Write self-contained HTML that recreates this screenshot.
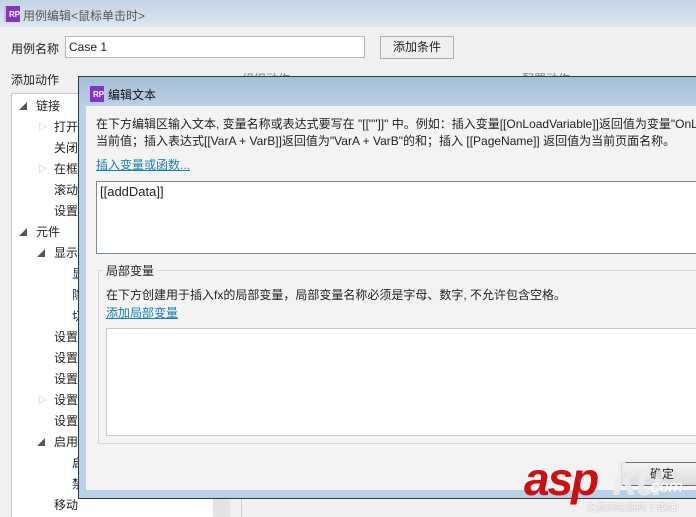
<!DOCTYPE html>
<html><head><meta charset="utf-8"><style>
*{margin:0;padding:0;box-sizing:border-box}
html,body{width:696px;height:517px;overflow:hidden}
body{position:relative;background:#f0f0f0;font-family:"Liberation Sans","Noto Sans CJK SC",sans-serif;font-size:12px;color:#222}
.a{position:absolute;white-space:nowrap}
.rp{position:absolute;width:16px;height:16px;background:#8236c4;color:#fff;font-size:8px;line-height:18px;text-align:left;padding-left:3px;font-weight:bold;border-left:2px solid #d4b4ee;overflow:hidden}
.tri{position:absolute;font-size:8px;color:#555}
.tro{position:absolute;font-size:9px;color:#bbb}
.lnk{color:#1a7fb0;text-decoration:underline}
#dlg{position:absolute;left:78px;top:76px;width:618px;height:423px;overflow:hidden}
</style></head><body>
<div class="a" style="left:0;top:0;width:696px;height:27px;background:linear-gradient(#c4d3e4,#dce6f0)"></div>
<div class="rp" style="left:4px;top:6px">RP</div>
<div class="a" style="left:23px;top:7px;font-size:12px;color:#555">用例编辑&lt;鼠标单击时&gt;</div>
<div class="a" style="left:11px;top:40px">用例名称</div>
<div class="a" style="left:65px;top:36px;width:300px;height:22px;background:#fff;border:1px solid #b5b5b5;padding:3px 3px;font-size:12px">Case 1</div>
<div class="a" style="left:380px;top:36px;width:74px;height:23px;background:#efefef;border:1px solid #adadad;text-align:center;line-height:21px">添加条件</div>
<div class="a" style="left:11px;top:71px">添加动作</div>
<div class="a" style="left:242px;top:70px;color:#777">组织动作</div>
<div class="a" style="left:522px;top:70px;color:#777">配置动作</div>
<div class="a" style="left:11px;top:93px;width:204px;height:430px;background:#fff;border:1px solid #c8c8c8"></div>
<div class="a" style="left:213px;top:498px;width:17px;height:20px;background:#e4e4e4"></div>
<div class="a" style="left:241px;top:498px;width:1px;height:20px;background:#ccc"></div>
<div class="tri" style="left:19px;top:101px">◢</div><div class="a" style="left:36px;top:97px">链接</div>
<div class="tro" style="left:38px;top:120px">▷</div><div class="a" style="left:54px;top:118px">打开</div>
<div class="a" style="left:54px;top:139px">关闭</div>
<div class="tro" style="left:38px;top:162px">▷</div><div class="a" style="left:54px;top:160px">在框</div>
<div class="a" style="left:54px;top:181px">滚动</div>
<div class="a" style="left:54px;top:202px">设置</div>
<div class="tri" style="left:19px;top:227px">◢</div><div class="a" style="left:36px;top:223px">元件</div>
<div class="tri" style="left:37px;top:248px">◢</div><div class="a" style="left:54px;top:244px">显示</div>
<div class="a" style="left:72px;top:265px">显</div>
<div class="a" style="left:72px;top:286px">隐</div>
<div class="a" style="left:72px;top:307px">切</div>
<div class="a" style="left:54px;top:328px">设置</div>
<div class="a" style="left:54px;top:349px">设置</div>
<div class="a" style="left:54px;top:370px">设置</div>
<div class="tro" style="left:38px;top:393px">▷</div><div class="a" style="left:54px;top:391px">设置</div>
<div class="a" style="left:54px;top:412px">设置</div>
<div class="tri" style="left:37px;top:437px">◢</div><div class="a" style="left:54px;top:433px">启用</div>
<div class="a" style="left:72px;top:454px">启</div>
<div class="a" style="left:72px;top:475px">禁</div>
<div class="a" style="left:54px;top:496px">移动</div>

<div id="dlg">
<div class="a" style="left:0;top:0;width:640px;height:423px;background:#b9d1e8;border:1px solid #2c3a46"></div>
<div class="a" style="left:1px;top:1px;width:640px;height:29px;background:linear-gradient(#a6bfd8,#b9d0e6)"></div>
<div class="rp" style="left:10px;top:10px">RP</div>
<div class="a" style="left:30px;top:10px;font-size:12px;color:#111">编辑文本</div>
<div class="a" style="left:8px;top:30px;width:640px;height:384px;background:#f3f3f3"></div>
<div class="a" style="left:18px;top:39px;font-size:12px">在下方编辑区输入文本, 变量名称或表达式要写在 "[[""]]" 中。例如：插入变量[[OnLoadVariable]]返回值为变量"OnLoadVariable"的</div>
<div class="a" style="left:18px;top:56px;font-size:12px">当前值；插入表达式[[VarA + VarB]]返回值为"VarA + VarB"的和；插入 [[PageName]] 返回值为当前页面名称。</div>
<div class="a lnk" style="left:18px;top:80px">插入变量或函数...</div>
<div class="a" style="left:18px;top:105px;width:640px;height:73px;background:#fff;border:1px solid #7a8a99;padding:2px 3px;font-size:13px">[[addData]]</div>
<div class="a" style="left:20px;top:194px;width:640px;height:174px;border:1px solid #d5d5d5"></div>
<div class="a" style="left:25px;top:186px;background:#f3f3f3;padding:0 3px">局部变量</div>
<div class="a" style="left:28px;top:210px">在下方创建用于插入fx的局部变量，局部变量名称必须是字母、数字, 不允许包含空格。</div>
<div class="a lnk" style="left:28px;top:228px">添加局部变量</div>
<div class="a" style="left:28px;top:252px;width:640px;height:108px;background:#fff;border:1px solid #c8c8c8"></div>
<div class="a" style="left:543px;top:386px;width:90px;height:24px;background:linear-gradient(#f4f4f4,#dcdcdc);border:1px solid #707070;border-radius:3px;line-height:22px;padding-left:28px">确定</div>
</div>
<div class="a" style="left:524px;top:452px;font-size:46px;font-weight:bold;font-style:italic;color:#cc1010;letter-spacing:-2px">asp</div>
<div class="a" style="left:612px;top:452px;font-size:46px;font-weight:bold;font-style:italic;color:rgba(235,235,235,0.85);letter-spacing:-2px">ku</div>
<div class="a" style="left:646px;top:477px;font-size:17px;font-style:italic;color:#fff">.com</div>
<div class="a" style="left:586px;top:499px;font-size:10px;color:#fff;text-shadow:0 0 1px #888">免费网站源码下载站!</div>
</body></html>
